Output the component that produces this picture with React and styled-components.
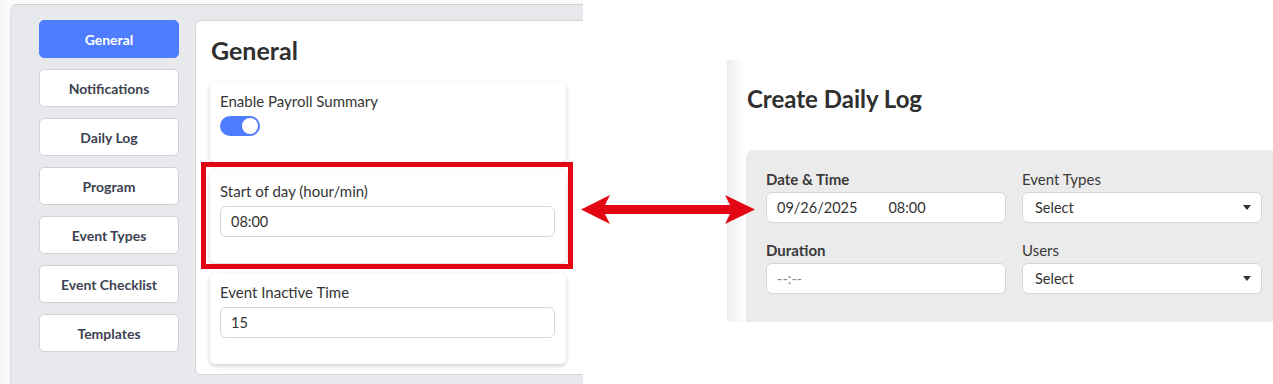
import React from 'react';
import styled, { createGlobalStyle } from 'styled-components';

const GlobalStyle = createGlobalStyle`
  body {
    margin: 0;
    background: #ffffff;
    font-family: Lato, "Liberation Sans", sans-serif;
    color: #333;
  }
`;

const Page = styled.div`
  display: flex;
  width: 1273px;
  height: 384px;
  position: relative;
  overflow: hidden;
`;

/* left screenshot */
const LeftShot = styled.div`
  width: 583px;
  height: 384px;
  flex-shrink: 0;
  overflow: hidden;
  padding: 4px 0 0 10px;
  box-sizing: border-box;
  background: linear-gradient(to right, #f4f4f5, #fbfbfb 10px);
`;

const SettingsFrame = styled.div`
  display: flex;
  gap: 16px;
  width: 620px;
  height: 400px;
  box-sizing: border-box;
  padding: 15px 0 0 28px;
  background: #e8e9ed;
  border-top: 1px solid #cfd0d4;
  border-left: 1px solid #dcdde1;
  border-top-left-radius: 7px;
`;

const SideMenu = styled.div`
  display: flex;
  flex-direction: column;
  gap: 11px;
  width: 140px;
  flex-shrink: 0;
`;

const MenuButton = styled.div`
  height: 38px;
  box-sizing: border-box;
  display: flex;
  align-items: center;
  justify-content: center;
  border-radius: 5px;
  font-size: 14px;
  font-weight: 700;
  color: ${({ $active }) => ($active ? '#ffffff' : '#3d4352')};
  background: ${({ $active }) => ($active ? '#4f7dff' : '#ffffff')};
  border: 1px solid ${({ $active }) => ($active ? '#4f7dff' : '#cfd1d6')};
`;

const MainPanel = styled.div`
  width: 420px;
  height: 355px;
  box-sizing: border-box;
  background: #ffffff;
  border: 1px solid #d6d7db;
  border-radius: 6px;
  padding: 14px 0 0 14px;
`;

const PanelTitle = styled.h2`
  margin: 0 0 17px 1px;
  font-size: 25px;
  line-height: 30px;
  font-weight: 700;
  color: #2f2f2f;
`;

const CardStack = styled.div`
  display: flex;
  flex-direction: column;
  gap: 10px;
  width: 356px;
`;

const Card = styled.div`
  position: relative;
  background: #ffffff;
  border-radius: 6px;
  padding: 10px 11px 26px 10px;
  box-shadow: 0 2px 5px rgba(0, 0, 0, 0.18);

  ${({ $highlight }) =>
    $highlight &&
    `
    &::after {
      content: '';
      position: absolute;
      top: -10px;
      left: -9px;
      right: -7px;
      bottom: -6px;
      border: 5px solid #e30613;
      pointer-events: none;
    }
  `}
`;

const CardLabel = styled.div`
  font-size: 15px;
  line-height: 18px;
  color: #353535;
  margin-bottom: 6px;
`;

const Toggle = styled.div`
  width: 40px;
  height: 20px;
  border-radius: 10px;
  background: #4f7dff;
  display: flex;
  align-items: center;
  justify-content: flex-end;
  padding: 0 2px;
  box-sizing: border-box;

  &::before {
    content: '';
    width: 16px;
    height: 16px;
    border-radius: 50%;
    background: #ffffff;
  }
`;

const InputBox = styled.div`
  height: 31px;
  box-sizing: border-box;
  display: flex;
  align-items: center;
  gap: ${({ $gap }) => $gap || 0}px;
  padding: 0 10px;
  border: 1px solid #d4d5d9;
  border-radius: 6px;
  background: #ffffff;
  font-size: 14.5px;
  color: ${({ $muted }) => ($muted ? '#8a8a8a' : '#333')};
`;

/* right screenshot */
const RightShot = styled.div`
  width: 546px;
  height: 262px;
  margin: 60px 0 0 144px;
  flex-shrink: 0;
  box-sizing: border-box;
  padding-left: 19px;
  background: linear-gradient(to right, #eeeeee 0, #f7f7f7 10px, #ffffff 19px);
  overflow: hidden;
`;

const LogTitle = styled.h2`
  margin: 0;
  padding: 24px 0 0 1px;
  height: 90px;
  box-sizing: border-box;
  font-size: 24px;
  line-height: 30px;
  font-weight: 700;
  color: #2f2f2f;
`;

const FormBox = styled.div`
  height: 172px;
  box-sizing: border-box;
  background: #ebebeb;
  border-top-left-radius: 8px;
  padding: 20px 0 0 20px;
  display: grid;
  grid-template-columns: 240px 240px;
  column-gap: 16px;
  row-gap: 18px;
  align-content: start;
`;

const Field = styled.div`
  display: flex;
  flex-direction: column;
  gap: 4px;
`;

const FieldLabel = styled.div`
  font-size: 15px;
  line-height: 18px;
  font-weight: ${({ $bold }) => ($bold ? 700 : 400)};
  color: #3a3a3a;
`;

const SelectBox = styled(InputBox)`
  justify-content: space-between;
  padding: 0 10px 0 12px;

  &::after {
    content: '';
    border-left: 4px solid transparent;
    border-right: 4px solid transparent;
    border-top: 5px solid #333;
  }
`;

const ArrowOverlay = styled.svg`
  position: absolute;
  left: 580px;
  top: 194px;
  pointer-events: none;
`;

const App = () => {
  const menu = [
    'General',
    'Notifications',
    'Daily Log',
    'Program',
    'Event Types',
    'Event Checklist',
    'Templates',
  ];

  return (
    <Page>
      <GlobalStyle />
      <LeftShot>
        <SettingsFrame>
          <SideMenu>
            {menu.map((item) => (
              <MenuButton key={item} $active={item === 'General'}>
                {item}
              </MenuButton>
            ))}
          </SideMenu>
          <MainPanel>
            <PanelTitle>General</PanelTitle>
            <CardStack>
              <Card>
                <CardLabel>Enable Payroll Summary</CardLabel>
                <Toggle />
              </Card>
              <Card $highlight>
                <CardLabel>Start of day (hour/min)</CardLabel>
                <InputBox>08:00</InputBox>
              </Card>
              <Card>
                <CardLabel>Event Inactive Time</CardLabel>
                <InputBox>15</InputBox>
              </Card>
            </CardStack>
          </MainPanel>
        </SettingsFrame>
      </LeftShot>

      <RightShot>
        <LogTitle>Create Daily Log</LogTitle>
        <FormBox>
          <Field>
            <FieldLabel $bold>Date &amp; Time</FieldLabel>
            <InputBox $gap={31}>
              <span>09/26/2025</span>
              <span>08:00</span>
            </InputBox>
          </Field>
          <Field>
            <FieldLabel>Event Types</FieldLabel>
            <SelectBox>Select</SelectBox>
          </Field>
          <Field>
            <FieldLabel $bold>Duration</FieldLabel>
            <InputBox $muted>--:--</InputBox>
          </Field>
          <Field>
            <FieldLabel>Users</FieldLabel>
            <SelectBox>Select</SelectBox>
          </Field>
        </FormBox>
      </RightShot>

      <ArrowOverlay width="178" height="32" viewBox="0 0 178 32">
        <path
          d="M1 15.5 L30 1 L25 11 L150 11 L145 1 L175 15.5 L145 30 L150 20 L25 20 L30 30 Z"
          fill="#e30613"
        />
      </ArrowOverlay>
    </Page>
  );
};

export default App;
